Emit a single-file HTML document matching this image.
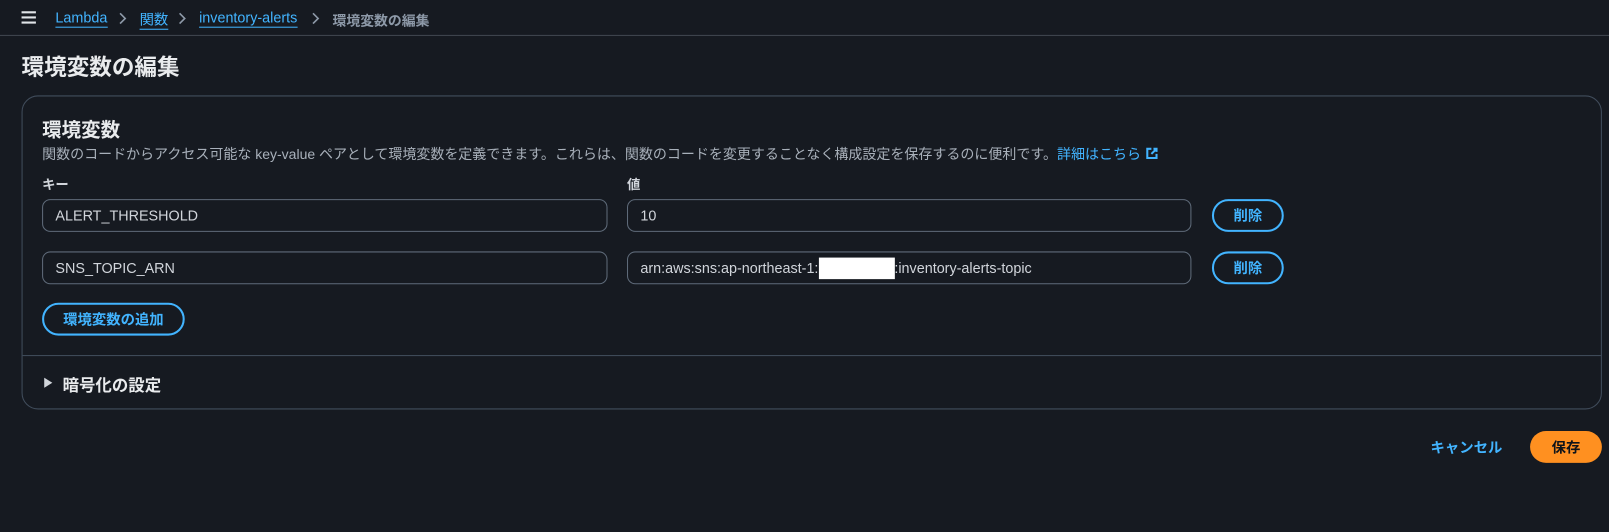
<!DOCTYPE html>
<html><head><meta charset="utf-8"><style>
*{box-sizing:border-box;margin:0;padding:0}
html,body{width:1609px;height:532px;background:#161a21;overflow:hidden}
body{font-family:"Liberation Sans","Noto Sans CJK JP",sans-serif;color:#d1d5db;position:relative}
#w{position:absolute;left:0;top:0;width:1568px;height:518px;transform:scale(1.0262);transform-origin:0 0}
.a{position:absolute}
.top{left:0;top:0;width:1568px;height:35px;border-bottom:1px solid #414750}
.bc{top:9px;font-size:14px;color:#42b4ff}
.bc u{text-decoration:none;border-bottom:1px solid #42b4ff;padding-bottom:1px}
.card{left:21px;top:93px;width:1540px;height:306px;border:1px solid #414d5c;border-radius:16px}
.inp{height:32px;border:1px solid #5f6b7a;border-radius:8px;font-size:14px;color:#d1d5db;padding:0 12px;display:flex;align-items:center;background:#161a21;white-space:nowrap}
.btn{height:32px;border:2px solid #42b4ff;border-radius:16px;color:#42b4ff;font-size:14px;font-weight:bold;display:flex;align-items:center;justify-content:center}
</style></head><body><div id="w">
<div class="a top"></div>
<svg class="a" style="left:20px;top:10px" width="16" height="14"><path d="M1 2h14M1 7h14M1 12h14" stroke="#e0e4e8" stroke-width="2"/></svg>
<div class="a bc" style="left:54px"><u>Lambda</u></div>
<svg class="a" style="left:116px;top:12px" width="8" height="12"><path d="M1 1l5 5-5 5" stroke="#8d99a8" stroke-width="1.6" fill="none"/></svg>
<div class="a bc" style="left:136px"><u>関数</u></div>
<svg class="a" style="left:174px;top:12px" width="8" height="12"><path d="M1 1l5 5-5 5" stroke="#8d99a8" stroke-width="1.6" fill="none"/></svg>
<div class="a bc" style="left:194px"><u>inventory-alerts</u></div>
<svg class="a" style="left:304px;top:12px" width="8" height="12"><path d="M1 1l5 5-5 5" stroke="#8d99a8" stroke-width="1.6" fill="none"/></svg>
<div class="a" style="left:324px;top:9px;font-size:13.5px;color:#8d99a8;font-weight:bold">環境変数の編集</div>
<div class="a" style="left:21px;top:48px;font-size:22px;font-weight:bold;color:#e9ebed">環境変数の編集</div>
<div class="a card"></div>
<div class="a" style="left:41px;top:112px;font-size:19px;font-weight:bold;color:#e9ebed">環境変数</div>
<div class="a" style="left:41px;top:139px;font-size:13.65px;color:#a8b0ba;white-space:nowrap">関数のコードからアクセス可能な key-value ペアとして環境変数を定義できます。これらは、関数のコードを変更することなく構成設定を保存するのに便利です。<span style="color:#42b4ff">詳細はこちら</span> <svg width="13" height="13" style="vertical-align:-1px"><path d="M6 2H2v9h9V7M8 2h3v3M11 2L6 7" stroke="#42b4ff" stroke-width="2" fill="none"/></svg></div>
<div class="a" style="left:41px;top:169px;font-size:13px;font-weight:bold;color:#d1d5db">キー</div>
<div class="a" style="left:611px;top:169px;font-size:13px;font-weight:bold;color:#d1d5db">値</div>
<div class="a inp" style="left:41px;top:194px;width:551px">ALERT_THRESHOLD</div>
<div class="a inp" style="left:611px;top:194px;width:550px">10</div>
<div class="a btn" style="left:1181px;top:194px;width:70px">削除</div>
<div class="a inp" style="left:41px;top:245px;width:551px">SNS_TOPIC_ARN</div>
<div class="a inp" style="left:611px;top:245px;width:550px">arn:aws:sns:ap-northeast-1:<span style="display:inline-block;width:74px;height:21px;background:#fff"></span>:inventory-alerts-topic</div>
<div class="a btn" style="left:1181px;top:245px;width:70px">削除</div>
<div class="a btn" style="left:41px;top:295px;width:139px">環境変数の追加</div>
<div class="a" style="left:22px;top:346px;width:1538px;height:1px;background:#414d5c"></div>
<svg class="a" style="left:43px;top:368px" width="9" height="10"><path d="M0 0L8 5L0 10Z" fill="#d1d5db"/></svg>
<div class="a" style="left:61px;top:362px;font-size:16px;font-weight:bold;color:#e9ebed">暗号化の設定</div>
<div class="a" style="left:1394px;top:426px;font-size:14px;font-weight:bold;color:#42b4ff">キャンセル</div>
<div class="a" style="left:1491px;top:420px;width:70px;height:31px;border-radius:16px;background:#ff9020;color:#0f141a;font-size:14px;font-weight:bold;display:flex;align-items:center;justify-content:center">保存</div>
</div></body></html>
